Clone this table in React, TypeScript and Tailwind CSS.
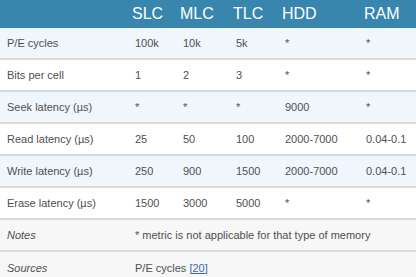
import React from "react";

const cols = "grid grid-cols-[127px_48px_53px_49px_81px_1fr]";

type Row = { label: string; vals: string[]; bg: string };

const rows: Row[] = [
  { label: "P/E cycles", vals: ["100k", "10k", "5k", "*", "*"], bg: "bg-[#eff6fc]" },
  { label: "Bits per cell", vals: ["1", "2", "3", "*", "*"], bg: "bg-white" },
  { label: "Seek latency (µs)", vals: ["*", "*", "*", "9000", "*"], bg: "bg-[#eff6fc]" },
  { label: "Read latency (µs)", vals: ["25", "50", "100", "2000-7000", "0.04-0.1"], bg: "bg-white" },
  { label: "Write latency (µs)", vals: ["250", "900", "1500", "2000-7000", "0.04-0.1"], bg: "bg-[#eff6fc]" },
  { label: "Erase latency (µs)", vals: ["1500", "3000", "5000", "*", "*"], bg: "bg-white" },
];

export default function App() {
  return (
    <div
      className="w-[416px] h-[277px] overflow-hidden bg-white text-[11px] text-[#505050]"
      style={{ fontFamily: '"Liberation Sans", Arial, sans-serif' }}
    >
      <div className={`${cols} h-[28px] items-center bg-[#3886ae] text-white text-[16px]`}>
        <div />
        <div className="pl-[5px]">SLC</div>
        <div className="pl-[5px]">MLC</div>
        <div className="pl-[5px]">TLC</div>
        <div className="pl-[5px]">HDD</div>
        <div className="pl-[6px]">RAM</div>
      </div>
      {rows.map((r) => (
        <div
          key={r.label}
          className={`${cols} h-[32px] items-center border-b-2 border-[#dadada] ${r.bg}`}
        >
          <div className="pl-[7px]">{r.label}</div>
          {r.vals.map((v, i) => (
            <div key={i} className="pl-[8px]">
              {v}
            </div>
          ))}
        </div>
      ))}
      <div className={`${cols} h-[32px] items-center border-b-2 border-[#dadada] bg-[#f7f7f7]`}>
        <div className="pl-[7px] italic">Notes</div>
        <div className="col-span-5 pl-[8px]">* metric is not applicable for that type of memory</div>
      </div>
      <div className={`${cols} h-[32px] items-center bg-[#f7f7f7]`}>
        <div className="pl-[7px] italic">Sources</div>
        <div className="col-span-5 pl-[8px]">
          P/E cycles <span className="text-[#3366bb] underline">[20]</span>
        </div>
      </div>
    </div>
  );
}
